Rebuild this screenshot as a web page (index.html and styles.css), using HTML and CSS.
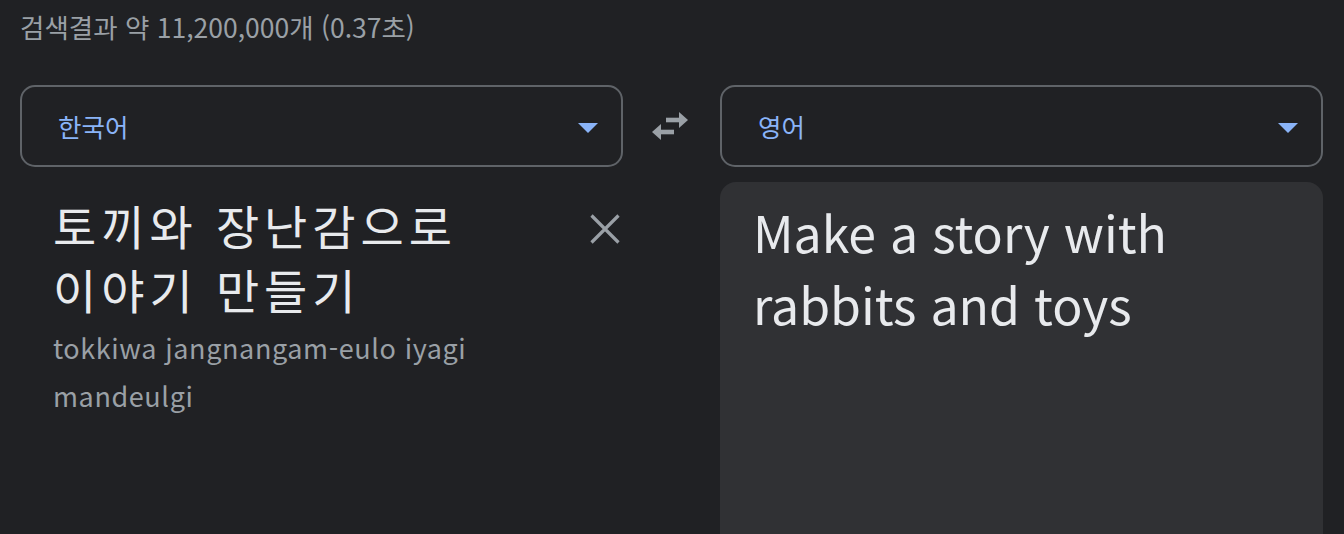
FILE: index.html
```html
<!DOCTYPE html>
<html lang="ko">
<head>
<meta charset="utf-8">
<link rel="stylesheet" href="styles.css">
</head>
<body>
<div class="page">
  <div class="stats">검색결과 약 11,200,000개 (0.37초)</div>
  <div class="grid selects">
    <div class="select">
      <span class="lang">한국어</span>
      <span class="caret"></span>
    </div>
    <div class="swap">
      <svg width="36" height="28" viewBox="0 0 36 28">
        <rect x="14" y="5.7" width="14" height="4.6" fill="#9aa0a6"/>
        <polygon points="27,0 36,8 27,16" fill="#9aa0a6"/>
        <rect x="8" y="17.7" width="14" height="4.6" fill="#9aa0a6"/>
        <polygon points="9,12 0,20 9,28" fill="#9aa0a6"/>
      </svg>
    </div>
    <div class="select">
      <span class="lang">영어</span>
      <span class="caret"></span>
    </div>
  </div>
  <div class="grid panes">
    <div class="source">
      <div class="source-text">
        <div class="src">토끼와 장난감으로<br>이야기 만들기</div>
        <div class="roman">tokkiwa jangnangam-eulo iyagi<br>mandeulgi</div>
      </div>
      <div class="clear">
        <svg width="30" height="30" viewBox="0 0 30 30">
          <path d="M1.5 1.5 L28.5 28.5 M28.5 1.5 L1.5 28.5" stroke="#9aa0a6" stroke-width="3.2" fill="none"/>
        </svg>
      </div>
    </div>
    <div></div>
    <div class="target">
      <div class="tgt">Make a story with<br>rabbits and toys</div>
    </div>
  </div>
</div>
</body>
</html>
```

FILE: styles.css
```css
html, body {
  margin: 0;
  padding: 0;
  background: #202124;
  height: 100%;
  overflow: hidden;
}
body {
  font-family: "Noto Sans CJK KR", "Noto Sans", sans-serif;
}
.page {
  padding: 0 21px 0 20px;
}
.stats {
  color: #9aa0a6;
  font-size: 26.5px;
  line-height: 36px;
  padding-top: 9px;
  height: 72px;
  box-sizing: border-box;
}
.grid {
  display: grid;
  grid-template-columns: 603px 97px 603px;
}
.selects {
  margin-top: 13px;
  height: 82px;
}
.select {
  border: 2px solid #5f6368;
  border-radius: 15px;
  display: flex;
  align-items: center;
  justify-content: space-between;
  padding: 0 23px 0 36px;
}
.lang {
  color: #8ab4f8;
  font-size: 25.5px;
  line-height: 30px;
}
.caret {
  width: 0;
  height: 0;
  border-left: 10px solid transparent;
  border-right: 10px solid transparent;
  border-top: 10px solid #8ab4f8;
  margin-top: 4px;
}
.swap {
  display: flex;
  align-items: center;
  justify-content: center;
}
.swap svg {
  margin-left: -3px;
}
.panes {
  margin-top: 15px;
  height: 352px;
}
.source {
  display: flex;
  justify-content: space-between;
  padding-left: 33px;
  padding-top: 11px;
}
.src {
  color: #e8eaed;
  font-size: 47px;
  line-height: 64px;
  letter-spacing: 5px;
}
.roman {
  color: #9aa0a6;
  font-size: 27px;
  line-height: 48px;
  letter-spacing: 0.6px;
  margin-top: 3px;
}
.clear {
  padding-top: 21px;
  padding-right: 3px;
}
.target {
  background: #303134;
  border-radius: 16px 16px 0 0;
  padding: 13px 33px;
}
.tgt {
  color: #e8eaed;
  font-size: 50px;
  line-height: 72px;
}
```
